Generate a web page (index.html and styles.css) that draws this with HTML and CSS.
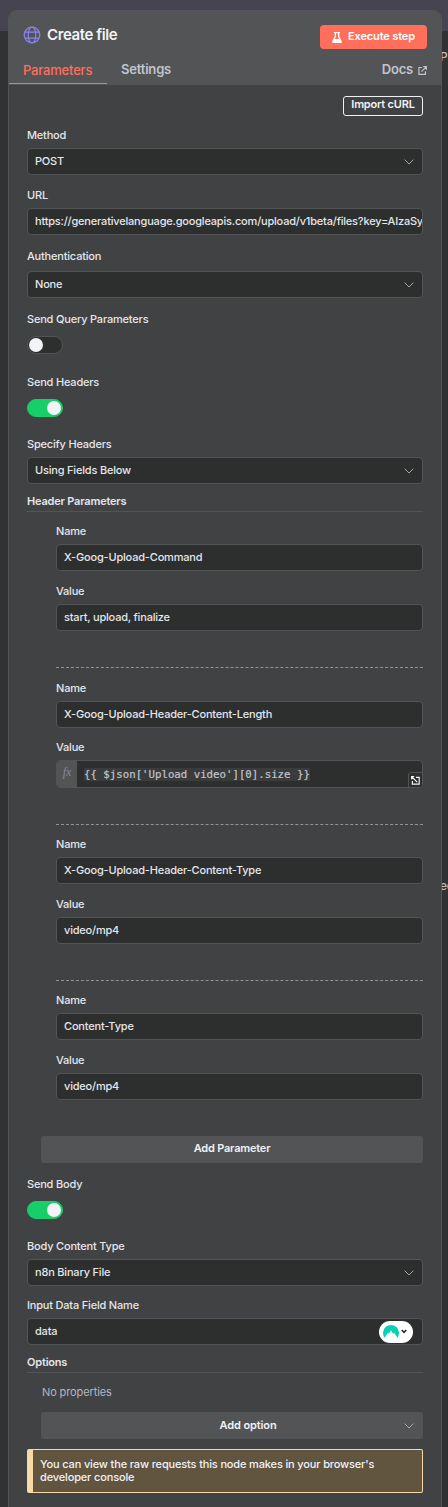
FILE: index.html
```html
<!DOCTYPE html>
<html lang="en">
<head>
<meta charset="utf-8">
<title>Create file</title>
<link rel="stylesheet" href="styles.css">
</head>
<body>
<svg class="defs" width="0" height="0"><symbol id="chevron" viewBox="0 0 10 6"><path d="M.6.6 5 5 9.4.6" fill="none" stroke="#a2a5ad" stroke-width="1"/></symbol></svg>
<div class="canvas-text canvas-top">P</div>
<div class="canvas-text canvas-mid">ed</div>
<main class="panel">
  <header class="header">
    <div class="title-row">
      <svg class="globe" viewBox="0 0 18 18" fill="none" stroke="#8b82e8" stroke-width="1.25"><circle cx="9" cy="9" r="7.8"/><ellipse cx="9" cy="9" rx="3.8" ry="7.8"/><path d="M1.8 6h14.4M1.8 12h14.4"/></svg>
      <h1 class="title">Create file</h1>
      <button class="execute"><svg class="flask" viewBox="0 0 10 11"><path d="M2 0h6v1.3h-.7v3.2L9.8 9.2Q10.3 11 8.7 11H1.3Q-.3 11 .2 9.2L2.7 4.5V1.3H2zM4 1.3v3.5L2.8 7h4.4L6 4.8V1.3z" fill="#fff" fill-rule="evenodd"/></svg><span>Execute step</span></button>
    </div>
    <nav class="tabs">
      <span class="tab active">Parameters</span>
      <span class="tab settings">Settings</span>
      <span class="tab docs">Docs<svg class="external" viewBox="0 0 10 10" fill="none" stroke="#c2c4ce" stroke-width="1.3"><path d="M4.3 1.7H1v7.6h7.3V5.8M5.8.7h3.5v3.5M9.1.9 3.8 6.2"/></svg></span>
    </nav>
  </header>
  <section class="content">
    <button class="import">Import cURL</button>
    <div class="field method"><label class="label">Method</label><div class="box select"><span>POST</span><svg class="chevron"><use href="#chevron"/></svg></div></div>
    <div class="field gap12"><label class="label">URL</label><div class="box url">https://generativelanguage.googleapis.com/upload/v1beta/files?key=AIzaSy</div></div>
    <div class="field auth"><label class="label">Authentication</label><div class="box select"><span>None</span><svg class="chevron"><use href="#chevron"/></svg></div></div>
    <div class="field switch-field gap13"><label class="label">Send Query Parameters</label><div class="switch"><i class="knob"></i></div></div>
    <div class="field switch-field gap20"><label class="label">Send Headers</label><div class="switch on"><i class="knob"></i></div></div>
    <div class="field gap19"><label class="label">Specify Headers</label><div class="box select"><span>Using Fields Below</span><svg class="chevron"><use href="#chevron"/></svg></div></div>
    <h2 class="section-title">Header Parameters</h2>
    <div class="params">
      <div class="param">
        <div class="field"><label class="label">Name</label><div class="box">X-Goog-Upload-Command</div></div>
        <div class="field gap12"><label class="label">Value</label><div class="box">start, upload, finalize</div></div>
      </div>
      <div class="param second">
        <div class="field"><label class="label">Name</label><div class="box">X-Goog-Upload-Header-Content-Length</div></div>
        <div class="field gap11"><label class="label">Value</label><div class="box expression"><span class="fx">fx</span><code class="code"><span>{{ $json['Upload video'][0].size }}</span></code><span class="expand"><svg viewBox="0 0 9 9" fill="none" stroke="#f2f2f7" stroke-width="1.2"><path d="M5 1.4h3.2v6.8H1.4V5M.6 3.2V.6h2.6M.8.8l5.4 5.4"/></svg></span></div></div>
      </div>
      <div class="param">
        <div class="field"><label class="label">Name</label><div class="box">X-Goog-Upload-Header-Content-Type</div></div>
        <div class="field gap12"><label class="label">Value</label><div class="box">video/mp4</div></div>
      </div>
      <div class="param">
        <div class="field"><label class="label">Name</label><div class="box">Content-Type</div></div>
        <div class="field gap12"><label class="label">Value</label><div class="box">video/mp4</div></div>
      </div>
    </div>
    <button class="add">Add Parameter</button>
    <div class="field switch-field gap13"><label class="label">Send Body</label><div class="switch on"><i class="knob"></i></div></div>
    <div class="field gap19"><label class="label">Body Content Type</label><div class="box select"><span>n8n Binary File</span><svg class="chevron"><use href="#chevron"/></svg></div></div>
    <div class="field gap11"><label class="label">Input Data Field Name</label><div class="box data"><span>data</span><span class="badge"><svg class="mountain" viewBox="0 0 16 13"><path d="M1.6 12.8A8 8 0 1 1 14.4 12.8L11.2 7.8 10.2 9 8 5.2 5.9 8.8 4.9 7.8z" fill="#09d0b4"/></svg><svg class="caret" viewBox="0 0 5 4"><path d="M.6.8 2.5 2.8 4.4.8" fill="none" stroke="#222" stroke-width="1.3"/></svg></span></div></div>
    <h2 class="section-title">Options</h2>
    <p class="empty">No properties</p>
    <button class="add option"><span>Add option</span><svg class="chevron"><use href="#chevron"/></svg></button>
    <div class="notice">You can view the raw requests this node makes in your browser's developer console</div>
  </section>
</main>
</body>
</html>
```
FILE: styles.css
```css
* { box-sizing: border-box; }
body {
  margin: 0; height: 1507px; padding: 10px 6px 0 8px; overflow: hidden; position: relative;
  background: linear-gradient(#464451 0 31px, #313233 31px);
  font: 500 11px/16px Inter, sans-serif; letter-spacing: -.19px; color: #e5e6eb;
}
.defs, .canvas-text { position: absolute; }
.canvas-text { font-size: 13px; color: #bcbec6; }
.canvas-top { left: 440px; top: 49px; font-size: 12px; }
.canvas-mid { left: 440px; top: 878px; font-size: 12px; }
.panel { position: relative; height: 1520px; background: #414244; border: 1px solid #535456; border-radius: 8px 8px 0 0; }
.header { height: 74px; background: #535456; border-radius: 7px 7px 0 0; }
.title-row { display: flex; align-items: center; height: 48px; padding: 0 14px 0 13.5px; }
.globe { width: 18px; height: 18px; }
.title { margin: 0 auto 0 6.5px; font: 600 15px/20px Inter, sans-serif; letter-spacing: -.4px; color: #f2f2f7; }
button { border: 0; padding: 0; font: 600 11px/16px Inter, sans-serif; letter-spacing: -.2px; color: #f0f1f5; background: none; }
.execute { display: flex; justify-content: center; align-items: center; gap: 6px; width: 107px; height: 24px; margin-top: 4px; border-radius: 4px; background: #ff6f5c; color: #fff; letter-spacing: -.15px; }
.execute span { margin-top: -2px; }
.flask { width: 10px; height: 11px; margin-top: 1px; }
.tabs { display: flex; height: 26px; font-size: 13px; line-height: 20px; color: #c2c4ce; }
.tab { font-weight: 600; }
.active { width: 98px; height: 25px; padding: 1px 0 0 14px; font-weight: 500; color: #ff6f5c; border-bottom: 1px solid #ff6f5c; }
.settings { margin-left: 14px; }
.docs { display: flex; align-items: center; height: 20px; margin: 0 14px 0 auto; }
.external { width: 9px; height: 9px; margin: 2px 0 0 5px; }
.content { display: flex; flex-direction: column; padding: 11px 18px 0; }
.import { align-self: flex-end; width: 80px; height: 20px; border: 1px solid #f0f1f5; border-radius: 3px; line-height: 15px; padding-bottom: 3px; }
.field { display: flex; flex-direction: column; gap: 5px; }
.method { margin-top: 11px; }
.auth { margin-top: 13px; gap: 7px; }
.switch-field { gap: 9px; }
.gap11 { margin-top: 11px; }
.gap12 { margin-top: 12px; }
.gap13 { margin-top: 13px; }
.gap19 { margin-top: 19px; }
.gap20 { margin-top: 20px; }
.label { height: 16px; }
.box { height: 27px; padding: 0 8px 0 7px; border: 1px solid #535456; border-radius: 4px; background: #2d2e2e; line-height: 24px; white-space: nowrap; overflow: hidden; }
.url { padding-right: 0; }
.select, .data { display: flex; align-items: center; justify-content: space-between; }
.select > span, .data > span:first-child { height: 25px; }
.chevron { width: 10px; height: 6px; }
.switch { width: 36px; height: 18px; padding: 1px; border: 1px solid #535456; border-radius: 9px; background: #2d2e2e; }
.knob { display: block; width: 14px; height: 14px; border-radius: 50%; background: #f2f2f7; }
.on { background: #17ce69; border-color: #17ce69; }
.on .knob { margin-left: 18px; }
.section-title { margin: 9px 0 0; height: 19px; border-bottom: 1px solid #535456; font: 600 11px/16px Inter, sans-serif; }
.params { margin: 11px 0 0 29px; }
.param + .param { margin-top: 36px; padding-top: 12px; border-top: 1px dashed #929396; }
.param.second { height: 121px; }
.param + .param:nth-child(3) { padding-top: 11px; }
.param + .param:nth-child(4) { padding-top: 11px; }
.expression { position: relative; display: flex; height: 28px; padding: 0; }
.fx { width: 20px; background: #535456; color: #888b94; text-align: center; font: italic 12px/23px "Liberation Serif", serif; }
.code { padding-left: 7px; font: 10.73px/27px "DejaVu Sans Mono", monospace; letter-spacing: 0; color: #c2c4ce; -webkit-text-stroke: .2px #c2c4ce; }
.code span { background: #3a3b3b; }
.expand { position: absolute; right: -1px; bottom: -1px; display: flex; align-items: center; justify-content: center; width: 15px; height: 16px; border: 1px solid #535456; border-radius: 3px 0 0; background: #2d2e2e; }
.expand svg { width: 9px; height: 9px; }
.add { height: 27px; margin: 36px 0 0 14px; border-radius: 3px; background: #535456; padding-bottom: 3px; }
.badge { display: flex; align-items: center; justify-content: center; gap: 2px; width: 34px; height: 22px; margin-right: 1px; padding-right: 3px; border-radius: 11px; background: #fff; }
.mountain { width: 16px; height: 13px; }
.caret { width: 6px; height: 5px; }
.empty { margin: 11px 0 0 15px; font-weight: 400; letter-spacing: -.12px; color: #b4b6c0; }
.option { display: flex; align-items: center; margin-top: 12px; padding: 0 9px 0 0; }
.option span { flex: 1; margin-top: -2px; padding-left: 51px; letter-spacing: -.1px; }
.notice { height: 44px; margin-top: 10px; padding: 8px 30px 0 7px; border: 1px solid #f8d9a8; border-left-width: 6px; border-radius: 2px; background: #615540; line-height: 13px; letter-spacing: -.15px; color: #f2f2f7; }
```
